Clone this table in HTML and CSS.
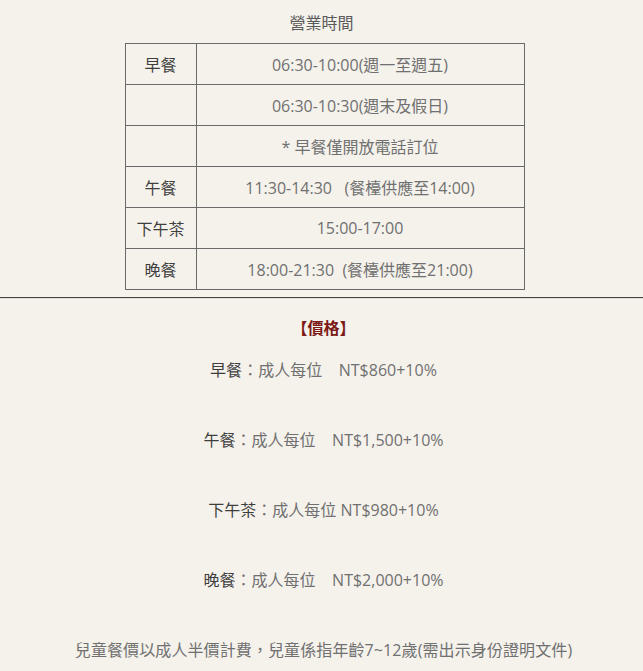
FILE: index.html
```html
<!DOCTYPE html>
<html lang="zh-Hant">
<head>
<meta charset="utf-8">
<link rel="stylesheet" href="styles.css">
</head>
<body>
<section class="hours">
  <p class="hours-title">營業時間</p>
  <table class="hours-table">
    <tr><th>早餐</th><td>06:30-10:00(週一至週五)</td></tr>
    <tr><th></th><td>06:30-10:30(週末及假日)</td></tr>
    <tr><th></th><td>* 早餐僅開放電話訂位</td></tr>
    <tr><th>午餐</th><td>11:30-14:30&nbsp;&nbsp; (餐檯供應至14:00)</td></tr>
    <tr><th>下午茶</th><td>15:00-17:00</td></tr>
    <tr><th>晚餐</th><td>18:00-21:30&nbsp; (餐檯供應至21:00)</td></tr>
  </table>
</section>
<hr class="divider">
<section class="prices">
  <p class="prices-title">【價格】</p>
  <p class="price-line"><strong>早餐</strong>：成人每位&nbsp;&nbsp;&nbsp; NT$860+10%</p>
  <p class="price-line"><strong>午餐</strong>：成人每位&nbsp;&nbsp;&nbsp; NT$1,500+10%</p>
  <p class="price-line"><strong>下午茶</strong>：成人每位 NT$980+10%</p>
  <p class="price-line"><strong>晚餐</strong>：成人每位&nbsp;&nbsp;&nbsp; NT$2,000+10%</p>
  <p class="price-line last">兒童餐價以成人半價計費，兒童係指年齡7~12歲(需出示身份證明文件)</p>
</section>
</body>
</html>
```

FILE: styles.css
```css
html, body {
  margin: 0;
  padding: 0;
  background: #f5f2ec;
}
body {
  font-family: "Open Sans", "Noto Sans CJK TC", sans-serif;
  font-size: 16px;
  color: #707070;
}
.hours {
  display: flex;
  flex-direction: column;
  align-items: center;
  padding-top: 11px;
}
.hours-title {
  margin: 0 0 8px;
  line-height: 24px;
  color: #5a5a5a;
}
.hours-table {
  border-collapse: collapse;
  width: 400px;
  margin: 0 0 7px 6px;
}
.hours-table th,
.hours-table td {
  border: 1px solid #6a6a6a;
  height: 40px;
  padding: 0;
  text-align: center;
  vertical-align: middle;
}
.hours-table th {
  width: 70px;
  font-weight: normal;
  color: #3e3e3e;
}
.divider {
  margin: 0;
  border: none;
  border-top: 1px solid #444;
  border-bottom: 1px solid #e2ded6;
  height: 0;
}
.prices {
  display: flex;
  flex-direction: column;
  align-items: center;
  padding: 15px 0 0 4px;
}
.prices p {
  margin: 0;
  line-height: 28px;
}
.prices-title {
  color: #7b1a16;
  font-weight: bold;
  margin-bottom: 14px !important;
}
.price-line {
  margin-bottom: 42px !important;
}
.price-line.last {
  letter-spacing: 0.1px;
}
.price-line strong {
  font-weight: normal;
  color: #3e3e3e;
}
```
